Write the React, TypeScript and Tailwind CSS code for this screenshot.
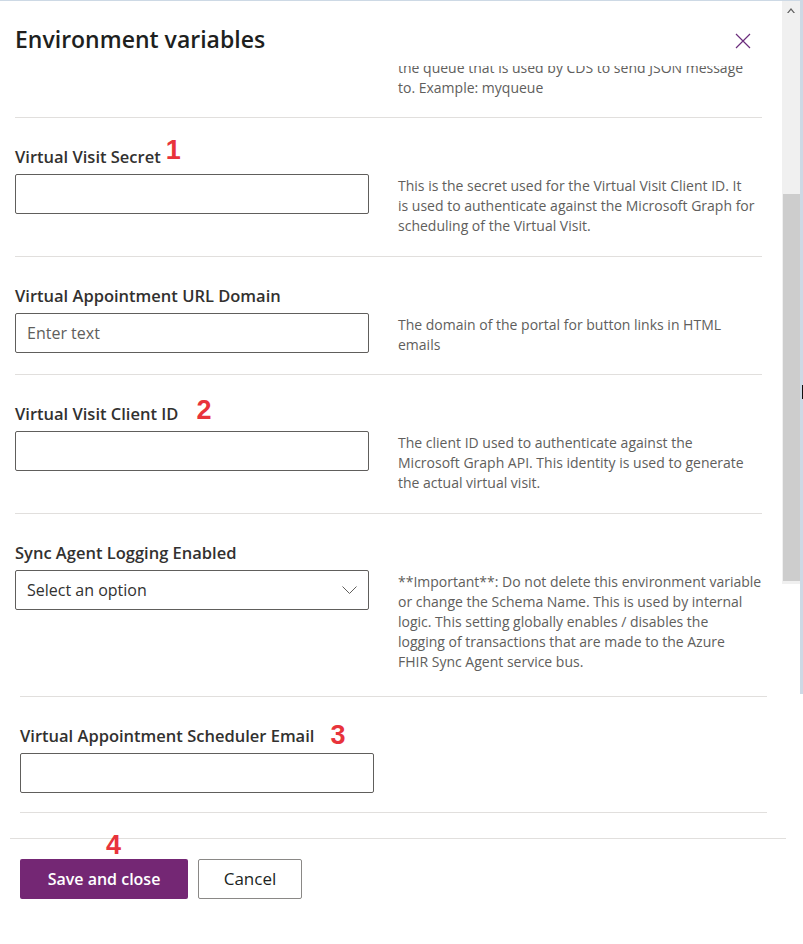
import React from "react";

type RowProps = {
  label?: string;
  mark?: string;
  markClass?: string;
  placeholder?: string;
  select?: boolean;
  lines: string[];
  className?: string;
};

function Mark({ children, className }: { children: React.ReactNode; className?: string }) {
  return (
    <span
      className={`font-['Liberation_Sans',sans-serif] text-[27px] font-bold leading-none text-[#e8333b] ${className ?? ""}`}
    >
      {children}
    </span>
  );
}

function Description({ lines, className }: { lines: string[]; className?: string }) {
  return (
    <p className={`whitespace-nowrap text-[14px] leading-[20px] text-[#605e5c] ${className ?? ""}`}>
      {lines.map((l) => (
        <span key={l} className="block">
          {l}
        </span>
      ))}
    </p>
  );
}

function Row({ label, mark, markClass, placeholder, select, lines, className }: RowProps) {
  return (
    <div className={`grid grid-cols-[354px_364px] gap-x-[29px] ${className ?? ""}`}>
      <div>
        <div className="flex h-[22px] items-end">
          <label className="text-[16.5px] font-semibold leading-[22px] text-[#323130]">{label}</label>
          {mark ? <Mark className={markClass}>{mark}</Mark> : null}
        </div>
        {select ? (
          <div className="mt-[6px] flex h-[40px] items-center justify-between rounded-[2px] border border-[#605e5c] pl-[11px] pr-[11px]">
            <span className="text-[16px] text-[#323130]">Select an option</span>
            <svg width="15" height="8" viewBox="0 0 15 8" fill="none">
              <path d="M0.5 0.5 L7.5 7.5 L14.5 0.5" stroke="#605e5c" strokeWidth="1" />
            </svg>
          </div>
        ) : (
          <input
            placeholder={placeholder}
            className="mt-[6px] block h-[40px] w-full rounded-[2px] border border-[#605e5c] px-[11px] text-[16px] text-[#323130] outline-none placeholder:text-[#605e5c]"
          />
        )}
      </div>
      <Description lines={lines} className="pt-[30px]" />
    </div>
  );
}

export default function App() {
  return (
    <div className="relative h-[944px] w-[803px] overflow-hidden border-t border-[#cdd9e5] bg-white font-['Open_Sans',sans-serif]">
      {/* header */}
      <div className="flex h-[65px] items-start justify-between pl-[15px]">
        <h1 className="pt-[22px] text-[23px] font-semibold leading-[32px] text-[#201f1e]">
          Environment variables
        </h1>
        <button className="mr-[52px] mt-[32px]" aria-label="Close">
          <svg width="16" height="16" viewBox="0 0 16 16" fill="none">
            <path d="M1 1 L15 15 M15 1 L1 15" stroke="#6b2d7c" strokeWidth="1.2" />
          </svg>
        </button>
      </div>

      {/* scrolled content */}
      <div className="overflow-hidden">
        <div className="ml-[15px] w-[747px]">
          <div className="grid grid-cols-[354px_364px] gap-x-[29px] border-b border-[#e1dfdd] pb-[19px]">
            <div />
            <Description
              className="-mt-[8px]"
              lines={["the queue that is used by CDS to send JSON message", "to. Example: myqueue"]}
            />
          </div>
          <Row
            label="Virtual Visit Secret"
            mark="1"
            markClass="ml-[5px] mb-[4px]"
            lines={[
              "This is the secret used for the Virtual Visit Client ID. It",
              "is used to authenticate against the Microsoft Graph for",
              "scheduling of the Virtual Visit.",
            ]}
            className="border-b border-[#e1dfdd] pt-[28px] pb-[20px]"
          />
          <Row
            label="Virtual Appointment URL Domain"
            placeholder="Enter text"
            lines={["The domain of the portal for button links in HTML", "emails"]}
            className="border-b border-[#e1dfdd] pt-[28px] pb-[19px]"
          />
          <Row
            label="Virtual Visit Client ID"
            mark="2"
            markClass="ml-[18px] mb-[1px]"
            lines={[
              "The client ID used to authenticate against the",
              "Microsoft Graph API. This identity is used to generate",
              "the actual virtual visit.",
            ]}
            className="border-b border-[#e1dfdd] pt-[28px] pb-[20px]"
          />
          <Row
            label="Sync Agent Logging Enabled"
            select
            lines={[
              "**Important**: Do not delete this environment variable",
              "or change the Schema Name. This is used by internal",
              "logic. This setting globally enables / disables the",
              "logging of transactions that are made to the Azure",
              "FHIR Sync Agent service bus.",
            ]}
            className="pt-[28px] pb-[24px]"
          />
        </div>

        <div className="ml-[20px] w-[747px] border-y border-[#e1dfdd] pt-[28px] pb-[19px]">
          <div className="w-[354px]">
            <div className="flex h-[22px] items-end">
              <label className="text-[16.5px] font-semibold leading-[22px] text-[#323130]">
                Virtual Appointment Scheduler Email
              </label>
              <Mark className="ml-[16px] -mb-[2px]">3</Mark>
            </div>
            <input className="mt-[6px] block h-[40px] w-full rounded-[2px] border border-[#605e5c] px-[11px] outline-none" />
          </div>
        </div>
      </div>

      {/* footer */}
      <div className="relative ml-[10px] mt-[25px] w-[776px] border-t border-[#e1dfdd] pl-[10px] pt-[20px]">
        <Mark className="absolute left-[96px] -top-[7px]">4</Mark>
        <div className="flex gap-[10px]">
          <button className="h-[40px] w-[168px] rounded-[2px] bg-[#742774] text-[16px] font-semibold text-white">
            Save and close
          </button>
          <button className="h-[40px] w-[104px] rounded-[2px] border border-[#8a8886] bg-white text-[17px] text-[#201f1e]">
            Cancel
          </button>
        </div>
      </div>

      {/* scrollbar */}
      <div className="absolute right-[3px] top-0 h-[583px] w-[18px] bg-[#f0f0f0]">
        <svg className="absolute left-[5px] top-[7px]" width="8" height="5" viewBox="0 0 8 5">
          <path d="M0 5 L4 0 L8 5 L6.5 5 L4 2 L1.5 5 Z" fill="#606060" />
        </svg>
        <div className="absolute left-[1px] right-0 top-[193px] h-[387px] bg-[#cdcdcd]" />
      </div>
      <div className="absolute right-0 top-0 h-[693px] w-[3px] bg-[#cdd9e5]" />
      <div className="absolute right-0 top-[384px] h-[14px] w-[1px] bg-[#111]" />
    </div>
  );
}
